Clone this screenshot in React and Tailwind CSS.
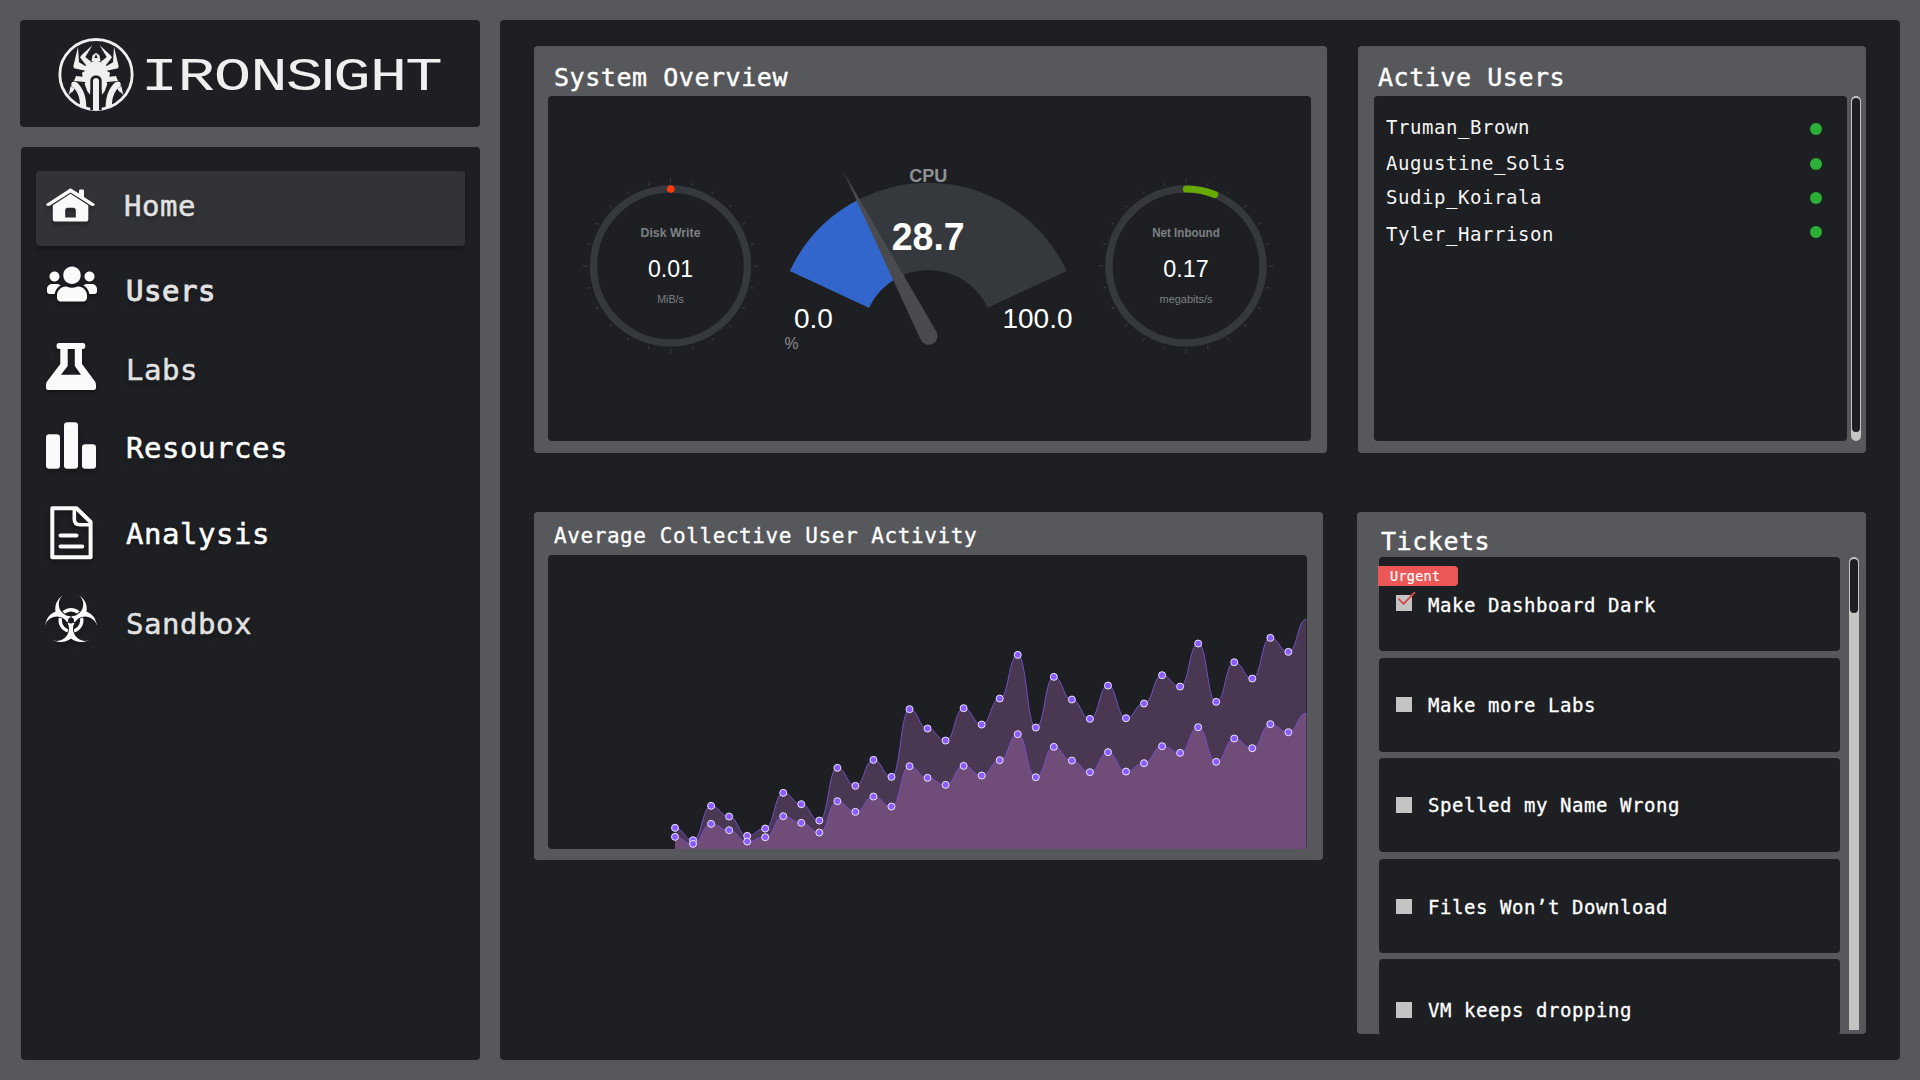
import { FaUsers } from "react-icons/fa";

const MONO = "font-['DejaVu_Sans_Mono','Liberation_Mono',monospace]";

function SpiderMark() {
  return (
    <svg viewBox="0 0 252 240" className="h-20 w-[84px] shrink-0" fill="#efefef">
      <ellipse cx="126" cy="121.5" rx="108.5" ry="105" fill="none" stroke="#efefef" strokeWidth="8.5" />
      {[false, true].map((flip) => (
        <g key={String(flip)} transform={flip ? "translate(252 0) scale(-1 1)" : undefined}>
          <path d="M72 38 L75 85 L94 96 L106 88 L126 78 V170 H112 V160 L108 182 L100 172 L92 150 L94 144 L60 141 L66 126 L86 128 L84 116 L94 110 L60 103 L58 97 Z" />
          <path d="M115 34 L94 69 L112 84 L98 96 L78 70 L84 62 Z" />
          <path d="M126 56 L116 64 L112 82 H126 Z" />
          <path d="M52 150 C53 141 63 140 73 149 C90 168 97 190 97 222 L78 214 C78 190 70 168 52 156 Z" />
          <path d="M50 156 L62 164 L56 173 L50 176 L44 184 Z" />
        </g>
      ))}
      <path d="M126 60 L121 72 H131 Z" fill="#1e1f23" />
      <path d="M109 228 V140 C109 119 143 119 143 140 V228 Z" fill="#1e1f23" />
      <path d="M117 228 V141 C117 129 135 129 135 141 V228 Z" />
    </svg>
  );
}

function Wordmark() {
  return (
    <svg width="320" height="64" viewBox="0 0 320 64" className="shrink-0 overflow-visible" fill="#efefef">
      <text
        transform="scale(1.33 1)"
        textAnchor="middle"
        y="47"
        x="13.9 41.6 68.8 96.2 123 140.6 158.6 186.1 212.8"
        fontFamily="'Liberation Mono', monospace"
        fontSize="47"
      >
        IRONS<tspan fontFamily="'Liberation Sans', sans-serif" fontSize="45">I</tspan>GHT
      </text>
    </svg>
  );
}

function HouseIcon() {
  return (
    <svg width="49" height="34" viewBox="0 0 49 34" fill="#fafafa">
      <path d="M24.5 0.2 L33 5.6 V2.8 Q33 1.6 34.2 1.6 H36.8 Q38 1.6 38 2.8 V9 L48.3 15.8 Q49.2 17 48.2 17.5 Q46.6 18.3 45 17.5 L24.5 4.6 L4 17.5 Q2.4 18.3 0.8 17.5 Q-0.2 17 0.7 15.8 Z" />
      <path
        fillRule="evenodd"
        d="M24.5 5.8 L42.3 17.2 V31 Q42.3 33.6 39.7 33.6 H9.5 Q6.8 33.6 6.8 31 V17.2 Z M19.2 29.4 H29.8 V22.5 Q29.8 19.8 27 19.8 H22 Q19.2 19.8 19.2 22.5 Z"
      />
    </svg>
  );
}

function FlaskIcon() {
  return (
    <svg width="50" height="47" viewBox="0 0 50 47" fill="#fafafa">
      <path
        fillRule="evenodd"
        d="M13 0 H37 Q39.3 0 39.3 3 Q39.3 6 37 6 H36 V21 L49 38.5 Q50 40 50 42 V44.5 Q50 47 47.5 47 H2.5 Q0 47 0 44.5 V42 Q0 40 1 38.5 L14.3 21 V6 H13 Q10.5 6 10.5 3 Q10.5 0 13 0 Z M21.7 6 V23 L15 31.7 H35 L28.8 23 V6 Z"
      />
    </svg>
  );
}

function BarsIcon() {
  return (
    <svg width="50" height="47" viewBox="0 0 50 47" fill="#fafafa">
      <rect x="0" y="12.3" width="14" height="34.4" rx="3.2" />
      <rect x="18" y="0.3" width="14" height="46.4" rx="3.2" />
      <rect x="36" y="22.3" width="14" height="24.4" rx="3.2" />
    </svg>
  );
}

function DocumentIcon() {
  return (
    <svg width="43" height="54" viewBox="0 0 43 54" fill="none" stroke="#fafafa" strokeWidth="4">
      <path d="M2.3 2.2 H26.5 L40.6 16 V51.3 H2.3 Z" strokeLinejoin="round" />
      <path d="M24.3 2.5 V13 Q24.3 18.7 30 18.7 H40" strokeWidth="3.6" />
      <path d="M10.5 29.5 H26.5 M10.5 40.5 H32.3" strokeLinecap="round" />
    </svg>
  );
}

const LOBES = [0, 120, 240];

function BiohazardIcon() {
  return (
    <svg width="54" height="54" viewBox="-25.7 -26.2 51.4 51.4" fill="#fafafa">
      <mask id="lobes" maskUnits="userSpaceOnUse" x="-30" y="-30" width="60" height="60">
        {LOBES.map((a) => (
          <circle key={a} cy="-11" r="15" fill="white" transform={`rotate(${a})`} />
        ))}
        {LOBES.map((a) => (
          <g key={a} transform={`rotate(${a})`} fill="black">
            <circle cy="-15.6" r="11.6" />
            <rect x="-5" y="-30" width="10" height="10" />
            <rect x="-0.5" y="-7" width="1" height="7" />
          </g>
        ))}
        <circle r="2.8" fill="black" />
      </mask>
      <clipPath id="ring">
        {LOBES.map((a) => (
          <circle key={a} cy="-15.6" r="10.7" transform={`rotate(${a})`} />
        ))}
      </clipPath>
      <rect x="-30" y="-30" width="60" height="60" mask="url(#lobes)" />
      <circle r="10.3" fill="none" stroke="#fafafa" strokeWidth="3.2" clipPath="url(#ring)" />
    </svg>
  );
}

const NAV = [
  { label: "Home", icon: <HouseIcon />, row: "h-[75px] bg-[#323337] shadow-[0_4px_4px_rgba(0,0,0,0.25)]", text: "-ml-0.5 pt-[13px] text-[#e2e2e2] [-webkit-text-stroke:0.5px_#e2e2e2]", iconPad: "pl-2.5 pt-[17px]" },
  { label: "Users", icon: <FaUsers className="size-[50px]" color="#fafafa" />, row: "h-[80px]", text: "pt-[23px] text-[#e2e2e2] [-webkit-text-stroke:1px_#e2e2e2]", iconPad: "pl-[11px] pt-[13px]" },
  { label: "Labs", icon: <FlaskIcon />, row: "h-[79px]", text: "pt-[22px] text-[#e2e2e2] [-webkit-text-stroke:0.5px_#e2e2e2]", iconPad: "pl-2.5 pt-[17px]" },
  { label: "Resources", icon: <BarsIcon />, row: "h-[79px]", text: "pt-[21px] text-white [-webkit-text-stroke:0.5px_white]", iconPad: "pl-2.5 pt-[17px]" },
  { label: "Analysis", icon: <DocumentIcon />, row: "h-[87px]", text: "pt-7 text-white [-webkit-text-stroke:0.5px_white]", iconPad: "pl-[14px] pt-[22px]" },
  { label: "Sandbox", icon: <BiohazardIcon />, row: "h-[87px]", text: "pt-[31px] text-[#e2e2e2] [-webkit-text-stroke:0.5px_#e2e2e2]", iconPad: "pl-2 pt-[22px]" },
];

function Sidebar() {
  return (
    <nav className="ml-px flex h-[913px] flex-col rounded bg-[#1e1f23] px-[15px] pt-6">
      {NAV.map((item) => (
        <div key={item.label} className={`flex shrink-0 items-start rounded ${item.row}`}>
          <div className={`w-[90px] shrink-0 drop-shadow-[0_3px_2px_rgba(0,0,0,0.3)] ${item.iconPad}`}>{item.icon}</div>
          <div className={`text-[29px] leading-[44px] tracking-[0.54px] [text-shadow:0_4px_4px_rgba(0,0,0,0.25)] ${item.text}`}>
            {item.label}
          </div>
        </div>
      ))}
    </nav>
  );
}

const TICKS = Array.from({ length: 24 }, (_, i) => i * 15);

function RingGauge({ cx, title, value, unit, titleWidth, valueWidth, unitWidth, children }) {
  return (
    <g>
      {TICKS.map((a) => (
        <path key={a} d={a % 90 === 0 ? "M0 -87.5 V-83" : "M0 -86 V-83"} stroke="#3a3d41" transform={`translate(${cx} 266) rotate(${a})`} />
      ))}
      <circle cx={cx} cy="266" r="77" fill="none" stroke="#35393d" strokeWidth="7.4" />
      {children}
      <g textAnchor="middle" fontFamily="'Liberation Sans', sans-serif">
        <text x={cx} y="237" fontSize="12.5" fontWeight="bold" fill="#7d8084" textLength={titleWidth} lengthAdjust="spacingAndGlyphs">{title}</text>
        <text x={cx} y="276.7" fontSize="24" fill="#ffffff" textLength={valueWidth} lengthAdjust="spacingAndGlyphs">{value}</text>
        <text x={cx} y="303" fontSize="11.5" fill="#7d8084" textLength={unitWidth} lengthAdjust="spacingAndGlyphs">{unit}</text>
      </g>
    </g>
  );
}

function Gauges() {
  return (
    <svg width="763" height="345" viewBox="548 96 763 345">
      <RingGauge cx={670.5} title="Disk Write" value="0.01" unit="MiB/s" titleWidth="60" valueWidth="45" unitWidth="26.5">
        <circle cx="670.8" cy="189" r="3.8" fill="#ff3912" />
      </RingGauge>
      <RingGauge cx={1186} title="Net Inbound" value="0.17" unit="megabits/s" titleWidth="67.5" valueWidth="45.5" unitWidth="53">
        <path d="M1186.5 189 A77 77 0 0 1 1214.6 194.5" fill="none" stroke="#66aa00" strokeWidth="7.2" strokeLinecap="round" />
      </RingGauge>
      <path d="M789.9 271 A152.7 152.7 0 0 1 1066.7 271 L987.7 307.8 A65.5 65.5 0 0 0 868.9 307.8 Z" fill="#35393d" />
      <path d="M789.9 271 A152.7 152.7 0 0 1 857.3 200.3 L897.9 277.5 A65.5 65.5 0 0 0 868.9 307.8 Z" fill="#3366cc" />
      <path d="M843.3 171.5 L936.3 331.5 A8.8 8.8 0 1 1 920.6 339.4 Z" fill="#494b4e" />
      <g fontFamily="'Liberation Sans', sans-serif">
        <text x="909.3" y="182" fontSize="18" fontWeight="bold" fill="#8e9194" textLength="38" lengthAdjust="spacingAndGlyphs">CPU</text>
        <text x="928.2" y="250" fontSize="38" fontWeight="bold" fill="#ffffff" textAnchor="middle" textLength="73" lengthAdjust="spacingAndGlyphs">28.7</text>
        <text x="794" y="328" fontSize="28" fill="#ffffff">0.0</text>
        <text x="1002.5" y="328" fontSize="28" fill="#ffffff" textLength="70" lengthAdjust="spacingAndGlyphs">100.0</text>
        <text x="784.5" y="348.5" fontSize="17" fill="#8a8c8f" textLength="14" lengthAdjust="spacingAndGlyphs">%</text>
      </g>
    </svg>
  );
}

// y values measured in thirds of a pixel from y = 500
const UPPER = [983, 1020, 917, 949, 1007, 985, 878, 912, 961, 803, 857, 779, 830, 627, 685, 721, 624, 673, 595, 464, 682, 530, 598, 656, 556, 654, 610, 525, 559, 430, 605, 486, 535, 413, 455, 357];
const LOWER = [1010, 1031, 971, 990, 1024, 1011, 948, 968, 997, 903, 935, 889, 919, 798, 833, 854, 797, 826, 780, 702, 831, 740, 781, 816, 756, 814, 789, 738, 758, 681, 785, 715, 744, 672, 696, 639];

const toPoints = (values) => values.map((v, i) => [675 + i * 18.04, 499.7 + v / 3]);

function curve(points) {
  return points.reduce((d, [x, y], i) => {
    if (i === 0) return `M${x} ${y}`;
    const [px, py] = points[i - 1];
    const mid = (px + x) / 2;
    return `${d} C${mid} ${py} ${mid} ${y} ${x} ${y}`;
  }, "");
}

function Series({ values, fill }) {
  const points = toPoints(values);
  const line = curve(points);
  return (
    <g>
      <path d={`${line} V850 H675 Z`} fill={fill} />
      <path d={line} fill="none" stroke="#7350c8" strokeWidth="1" />
      {points.slice(0, -1).map(([x, y]) => (
        <circle key={x} cx={x} cy={y} r="3.5" fill="#8a5cff" stroke="#e9e2ff" strokeWidth="1" />
      ))}
    </g>
  );
}

function ActivityChart() {
  return (
    <svg width="759" height="295" viewBox="548 554.5 759 295">
      <Series values={UPPER} fill="#4a3751" />
      <Series values={LOWER} fill="#704c79" />
    </svg>
  );
}

const USERS = [
  { name: "Truman_Brown", row: "h-[35px]", drop: "pt-0" },
  { name: "Augustine_Solis", row: "h-[34px]", drop: "pt-px" },
  { name: "Sudip_Koirala", row: "h-[34px]", drop: "pt-px" },
  { name: "Tyler_Harrison", row: "h-[34px]", drop: "pt-1" },
];

function ActiveUsers() {
  return (
    <section className="h-[407px] w-[508px] rounded bg-[#57585c] pl-4">
      <h2 className="h-[50px] pt-[13px] pl-1 text-[25px] leading-[38px] tracking-[0.55px] text-white [-webkit-text-stroke:0.4px_white]">Active Users</h2>
      <div className="flex gap-1">
        <ul className="h-[345px] w-[473px] rounded bg-[#1e1f23] pt-[15px] pr-[25px] pl-3">
          {USERS.map((u) => (
            <li key={u.name} className={`flex items-start justify-between ${u.row}`}>
              <span className={`${u.drop} text-[19px] leading-8 tracking-[0.56px] text-[#f4f4f4]`}>{u.name}</span>
              <span className="mt-3 size-3 rounded-full bg-[#2bb037]" />
            </li>
          ))}
        </ul>
        <div className="h-[345px] w-2.5 rounded-full bg-[#c4c4c4] px-px pt-0.5">
          <div className="h-[334px] rounded-full bg-[#1e1f23]" />
        </div>
      </div>
    </section>
  );
}

const TICKETS = [
  { title: "Make Dashboard Dark", urgent: true, card: "h-[94px]", pad: "pt-[33px]", box: "mt-[5px]" },
  { title: "Make more Labs", card: "h-[94px]", pad: "pt-[32px]", box: "mt-[7px]" },
  { title: "Spelled my Name Wrong", card: "h-[94px]", pad: "pt-[32px]", box: "mt-[7px]" },
  { title: "Files Won’t Download", card: "h-[94px]", pad: "pt-[33px]", box: "mt-[7px]" },
  { title: "VM keeps dropping", card: "h-[76px]", pad: "pt-[36px]", box: "mt-[7px]" },
];

function Tickets() {
  return (
    <section className="h-[522px] w-[509px] overflow-hidden rounded bg-[#57585c] pl-[22px]">
      <h2 className="h-[45px] pt-[11px] pl-0.5 text-[25px] leading-[38px] tracking-[0.55px] text-white [-webkit-text-stroke:0.4px_white]">Tickets</h2>
      <div className="flex gap-[9px]">
        <div className="flex h-[477px] w-[461px] flex-col gap-[6.6px]">
          {TICKETS.map((t) => (
            <div key={t.title} className={`relative flex shrink-0 items-start rounded bg-[#1e1f23] pl-[17px] ${t.card} ${t.pad}`}>
              {t.urgent && (
                <div className="absolute top-[9px] -left-px h-5 w-20 rounded-r bg-[#eb5757] pl-3 text-[13.5px] leading-5 tracking-[0.27px] text-white [-webkit-text-stroke:0.2px_white]">
                  Urgent
                </div>
              )}
              <div className={`relative h-[15.5px] w-4 shrink-0 bg-[#c4c4c4] ${t.box}`}>
                {t.urgent && (
                  <svg width="20" height="16" viewBox="0 0 20 16" className="absolute -top-1 left-0.5" fill="none" stroke="#d94848" strokeWidth="1.8">
                    <path d="M0.5 7.5 L5.5 13 L17 1.2" />
                  </svg>
                )}
              </div>
              <span className="ml-4 text-[19px] leading-[31px] tracking-[0.56px] text-white [-webkit-text-stroke:0.3px_white]">{t.title}</span>
            </div>
          ))}
        </div>
        <div className="h-[473px] w-2.5 rounded-t-full bg-[#c4c4c4] px-px pt-0.5">
          <div className="h-[54px] rounded-full bg-[#1e1f23]" />
        </div>
      </div>
    </section>
  );
}

export default function App() {
  return (
    <div className={`flex h-[1080px] w-[1920px] gap-5 overflow-hidden bg-[#57585c] p-5 ${MONO}`}>
      <aside className="flex w-[460px] shrink-0 flex-col gap-5">
        <header className="flex h-[107px] items-start rounded bg-[#1e1f23] pt-[14px] pl-[34px]">
          <SpiderMark />
          <div className="ml-[3px] pt-[9px]">
            <Wordmark />
          </div>
        </header>
        <Sidebar />
      </aside>
      <main className="flex h-[1040px] w-[1400px] shrink-0 justify-between rounded bg-[#1e1f23] px-[34px] pt-[26px]">
        <div className="flex flex-col gap-[59px]">
          <section className="h-[407px] w-[793px] rounded bg-[#57585c] pl-[14px]">
            <h2 className="h-[50px] pt-[13px] pl-1.5 text-[25px] leading-[38px] tracking-[0.55px] text-white [-webkit-text-stroke:0.4px_white]">System Overview</h2>
            <div className="h-[345px] w-[763px] overflow-hidden rounded bg-[#1e1f23]">
              <Gauges />
            </div>
          </section>
          <section className="h-[347.5px] w-[788.5px] rounded bg-[#57585c] pl-[14px]">
            <h2 className="h-[42.5px] pt-[5px] pl-1.5 text-[21px] leading-[38px] tracking-[0.58px] text-white [-webkit-text-stroke:0.3px_white]">Average Collective User Activity</h2>
            <div className="h-[294.5px] w-[759px] overflow-hidden rounded bg-[#1e1f23]">
              <ActivityChart />
            </div>
          </section>
        </div>
        <div className="flex flex-col items-end gap-[59px]">
          <ActiveUsers />
          <Tickets />
        </div>
      </main>
    </div>
  );
}
